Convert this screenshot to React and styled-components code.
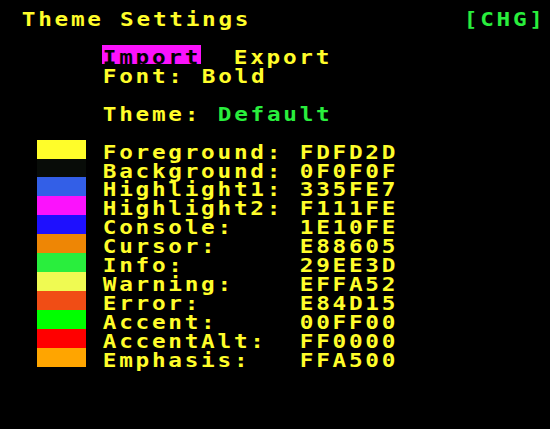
import React from "react";
import styled, { createGlobalStyle } from "styled-components";

const CELL = 16.39;
const ROW = 18.93;

const Global = createGlobalStyle`
  body { margin: 0; background: #000; overflow: hidden; }
`;

const Screen = styled.main`
  box-sizing: border-box;
  width: 550px;
  height: 429px;
  padding-top: 7.2px;
  background: #000;
  color: #fffd2a;
  font: bold 19.4px/${ROW}px "DejaVu Sans Mono", monospace;
`;

const Line = styled.div`
  display: flex;
  height: ${ROW}px;
  margin-bottom: ${(p) => (p.$gap ? ROW : 0)}px;
  padding-left: ${(p) => (p.$title ? 20.8 : 102.2)}px;
`;

const Cells = styled.div`
  flex: none;
  width: ${(p) => p.$n * CELL}px;
  height: ${ROW}px;
  background: ${(p) => (p.$selected ? "#fb12fc" : "transparent")};
  color: ${(p) => (p.$selected ? "#000" : p.$green ? "#29ee3d" : "inherit")};
`;

const Glyphs = styled.span`
  display: block;
  width: max-content;
  height: ${ROW}px;
  padding-left: 0.7px;
  white-space: pre;
  letter-spacing: 2.33px;
  transform: translateY(4.2px) scaleX(1.17);
  transform-origin: left;
`;

const Entry = styled.div`
  display: grid;
  grid-template-columns: 49.3px ${CELL * 12}px auto;
  grid-template-rows: ${ROW}px;
  height: ${ROW}px;
  padding-left: 36.6px;
`;

const Swatch = styled.div`
  background: ${(p) => p.$color};
`;

const Field = styled.div`
  padding-left: 16.3px;
`;

const Text = ({ n, children, ...rest }) => (
  <Cells $n={n} {...rest}>
    <Glyphs>{children}</Glyphs>
  </Cells>
);

const entries = [
  ["Foreground:", "FDFD2D", "#fffd2a"],
  ["Background:", "0F0F0F", "#080c08"],
  ["Highlight1:", "335FE7", "#335fe7"],
  ["Highlight2:", "F111FE", "#fb12fc"],
  ["Console:", "1E10FE", "#1e10fe"],
  ["Cursor:", "E88605", "#ee8605"],
  ["Info:", "29EE3D", "#29ee3d"],
  ["Warning:", "EFFA52", "#effa52"],
  ["Error:", "E84D15", "#f04d15"],
  ["Accent:", "00FF00", "#00ff00"],
  ["AccentAlt:", "FF0000", "#ff0000"],
  ["Emphasis:", "FFA500", "#ffa500"],
];

export default function App() {
  return (
    <>
      <Global />
      <Screen>
        <Line $title $gap>
          <Text n={27}>Theme Settings</Text>
          <Text n={5} $green>[CHG]</Text>
        </Line>
        <Line>
          <Text n={6} $selected>Import</Text>
          <Text n={2}> </Text>
          <Text n={6}>Export</Text>
        </Line>
        <Line $gap>
          <Text n={6}>Font:</Text>
          <Text n={4}>Bold</Text>
        </Line>
        <Line $gap>
          <Text n={7}>Theme:</Text>
          <Text n={7} $green>Default</Text>
        </Line>
        {entries.map(([label, value, color]) => (
          <Entry key={label}>
            <Swatch $color={color} />
            <Field><Glyphs>{label}</Glyphs></Field>
            <Field><Glyphs>{value}</Glyphs></Field>
          </Entry>
        ))}
      </Screen>
    </>
  );
}
